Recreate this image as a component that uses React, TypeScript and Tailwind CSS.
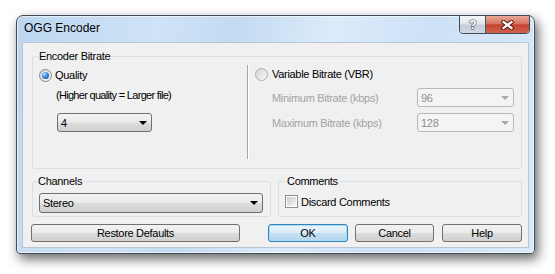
import React from 'react';

// Vista-style button / combo gradient
const glass = 'bg-[linear-gradient(#f2f2f2_0%,#ebebeb_48%,#dddddd_52%,#cfcfcf_100%)]';

function Arrow({ disabled }: { disabled?: boolean }) {
    return (
        <span
            className={`h-0 w-0 border-x-[4px] border-t-[4px] border-x-transparent ${
                disabled ? 'border-t-[#a8a8a8]' : 'border-t-black'
            }`}
        />
    );
}

function Combo({ value, className, disabled }: { value: string; className: string; disabled?: boolean }) {
    return (
        <div
            className={`flex items-center justify-between rounded-[3px] border pl-[3px] pr-[4px] text-[11px] leading-[12px] ${className} ${
                disabled ? 'border-[#b5b9bc] bg-[#f4f4f4] text-[#8e8e8e]' : `border-[#707070] ${glass} text-black`
            }`}
        >
            <span>{value}</span>
            <Arrow disabled={disabled} />
        </div>
    );
}

function Radio({ checked }: { checked?: boolean }) {
    return (
        <span
            className={`flex h-[13px] w-[13px] shrink-0 items-center justify-center rounded-full border ${
                checked
                    ? 'border-[#7c8591] bg-[linear-gradient(135deg,#cfd3d8,#f7f7f7)]'
                    : 'border-[#a9adb2] bg-[linear-gradient(135deg,#d4d4d4,#f8f8f8)]'
            }`}
        >
            {checked && (
                <span className="h-[7px] w-[7px] rounded-full bg-[radial-gradient(circle_at_35%_30%,#b6e2ff_0%,#3a8be0_45%,#0c3c86_100%)]" />
            )}
        </span>
    );
}

function Button({ label, className, primary }: { label: string; className: string; primary?: boolean }) {
    return (
        <button
            className={`flex h-[18px] items-center justify-center rounded-[3px] border text-[11px] leading-[12px] text-black ${className} ${
                primary
                    ? 'border-[#3c7fb1] bg-[linear-gradient(#eaf5fc_0%,#dcedf8_48%,#c4e0f3_52%,#b3d6ef_100%)] shadow-[inset_0_0_0_1px_#9ee0fb]'
                    : `border-[#707070] ${glass}`
            }`}
        >
            {label}
        </button>
    );
}

export default function App() {
    return (
        <div className="h-[274px] w-[555px] overflow-hidden bg-white pl-[16px] pt-[15px] tracking-[-0.3px] [font-family:'Liberation_Sans',Arial,sans-serif]">
            <div className="flex h-[239px] w-[519px] flex-col rounded-t-[7px] rounded-b-[4px] border border-[#3f4c5a] bg-[linear-gradient(105deg,#bcd6f0_0%,#cfe3f7_25%,#c3daf2_38%,#dcebfa_55%,#cde1f6_72%,#d9e9f9_100%)] shadow-[inset_0_0_0_1px_rgba(255,255,255,0.6),3px_5px_12px_rgba(0,0,0,0.6)]">
                {/* title bar */}
                <div className="flex h-[26px] shrink-0 items-start justify-between">
                    <span className="pl-[7px] pt-[5px] text-[12px] leading-[14px] tracking-normal text-black">
                        OGG Encoder
                    </span>
                    <div className="mr-[4px] -mt-px flex h-[19px] overflow-hidden rounded-b-[4px] border border-[#3f4c5a]">
                        <div className="flex w-[26px] items-center justify-center border-r border-[#4a5663] bg-[linear-gradient(#f4f6f9_0%,#dfe5ec_48%,#c3ceda_52%,#cfd9e3_100%)]">
                            <span className="text-[13px] font-bold leading-[13px] text-white [-webkit-text-stroke:1px_#3a4756] [paint-order:stroke_fill]">
                                ?
                            </span>
                        </div>
                        <div className="flex w-[43px] items-center justify-center bg-[linear-gradient(#eaa898_0%,#d77462_45%,#c4432f_52%,#cf6450_100%)]">
                            <svg width="13" height="10" viewBox="0 0 13 10">
                                <path d="M2.5 2 L10.5 8 M10.5 2 L2.5 8" stroke="#5b1a12" strokeWidth="4.2" strokeLinecap="square" />
                                <path d="M2.5 2 L10.5 8 M10.5 2 L2.5 8" stroke="#fff" strokeWidth="2.2" strokeLinecap="square" />
                            </svg>
                        </div>
                    </div>
                </div>

                {/* client area */}
                <div className="flex flex-1 px-[5px] pb-[5px]">
                    <div className="flex flex-1 flex-col border border-[#b9c5d1] bg-[#f0f0f0] pl-[9px] pt-[7px] text-[11px] leading-[12px] text-black">
                        <fieldset className="h-[119px] w-[490px] rounded-[3px] border border-[#d5dfe5]">
                            <legend className="ml-[5px] px-[1px]">Encoder Bitrate</legend>
                            <div className="flex">
                                <div className="flex w-[214px] flex-col">
                                    <div className="ml-[6px] mt-[6px] flex h-[14px] items-center gap-[3px]">
                                        <Radio checked />
                                        <span>Quality</span>
                                    </div>
                                    <span className="ml-[23px] mt-[7px] tracking-[-0.7px]">(Higher quality = Larger file)</span>
                                    <Combo value="4" className="ml-[24px] mt-[12px] h-[19px] w-[95px]" />
                                </div>
                                <div className="mt-[3px] h-[94px] w-px bg-[#a6a6a6] shadow-[1px_0_0_#ffffff]" />
                                <div className="flex flex-1 flex-col">
                                    <div className="ml-[7px] mt-[5px] flex h-[14px] items-center gap-[4px]">
                                        <Radio />
                                        <span>Variable Bitrate (VBR)</span>
                                    </div>
                                    <div className="mt-[7px] flex items-center">
                                        <span className="ml-[24px] text-[#a3a3a3]">Minimum Bitrate (kbps)</span>
                                        <Combo value="96" disabled className="ml-auto mr-[7px] h-[19px] w-[97px]" />
                                    </div>
                                    <div className="mt-[6px] flex items-center">
                                        <span className="ml-[24px] text-[#a3a3a3]">Maximum Bitrate (kbps)</span>
                                        <Combo value="128" disabled className="ml-auto mr-[7px] h-[19px] w-[97px]" />
                                    </div>
                                </div>
                            </div>
                        </fieldset>

                        <div className="mt-[6px] flex gap-[7px]">
                            <fieldset className="h-[42px] w-[239px] rounded-[3px] border border-[#d5dfe5]">
                                <legend className="ml-[4px] px-[1px]">Channels</legend>
                                <Combo value="Stereo" className="ml-[6px] mr-[7px] mt-[6px] h-[20px]" />
                            </fieldset>
                            <fieldset className="h-[42px] w-[244px] rounded-[3px] border border-[#d5dfe5]">
                                <legend className="ml-[7px] px-[1px]">Comments</legend>
                                <div className="ml-[6px] mt-[8px] flex items-center gap-[3px]">
                                    <span className="flex h-[13px] w-[13px] items-center justify-center border border-[#8e8f8f] bg-white">
                                        <span className="h-[9px] w-[9px] bg-[linear-gradient(135deg,#c9ccd1,#f4f4f4)]" />
                                    </span>
                                    <span>Discard Comments</span>
                                </div>
                            </fieldset>
                        </div>

                        <div className="mt-[7px] flex">
                            <Button label="Restore Defaults" className="-ml-px w-[209px]" />
                            <Button label="OK" primary className="ml-[28px] w-[80px]" />
                            <Button label="Cancel" className="ml-[7px] w-[79px]" />
                            <Button label="Help" className="ml-[8px] w-[80px]" />
                        </div>
                    </div>
                </div>
            </div>
        </div>
    );
}
